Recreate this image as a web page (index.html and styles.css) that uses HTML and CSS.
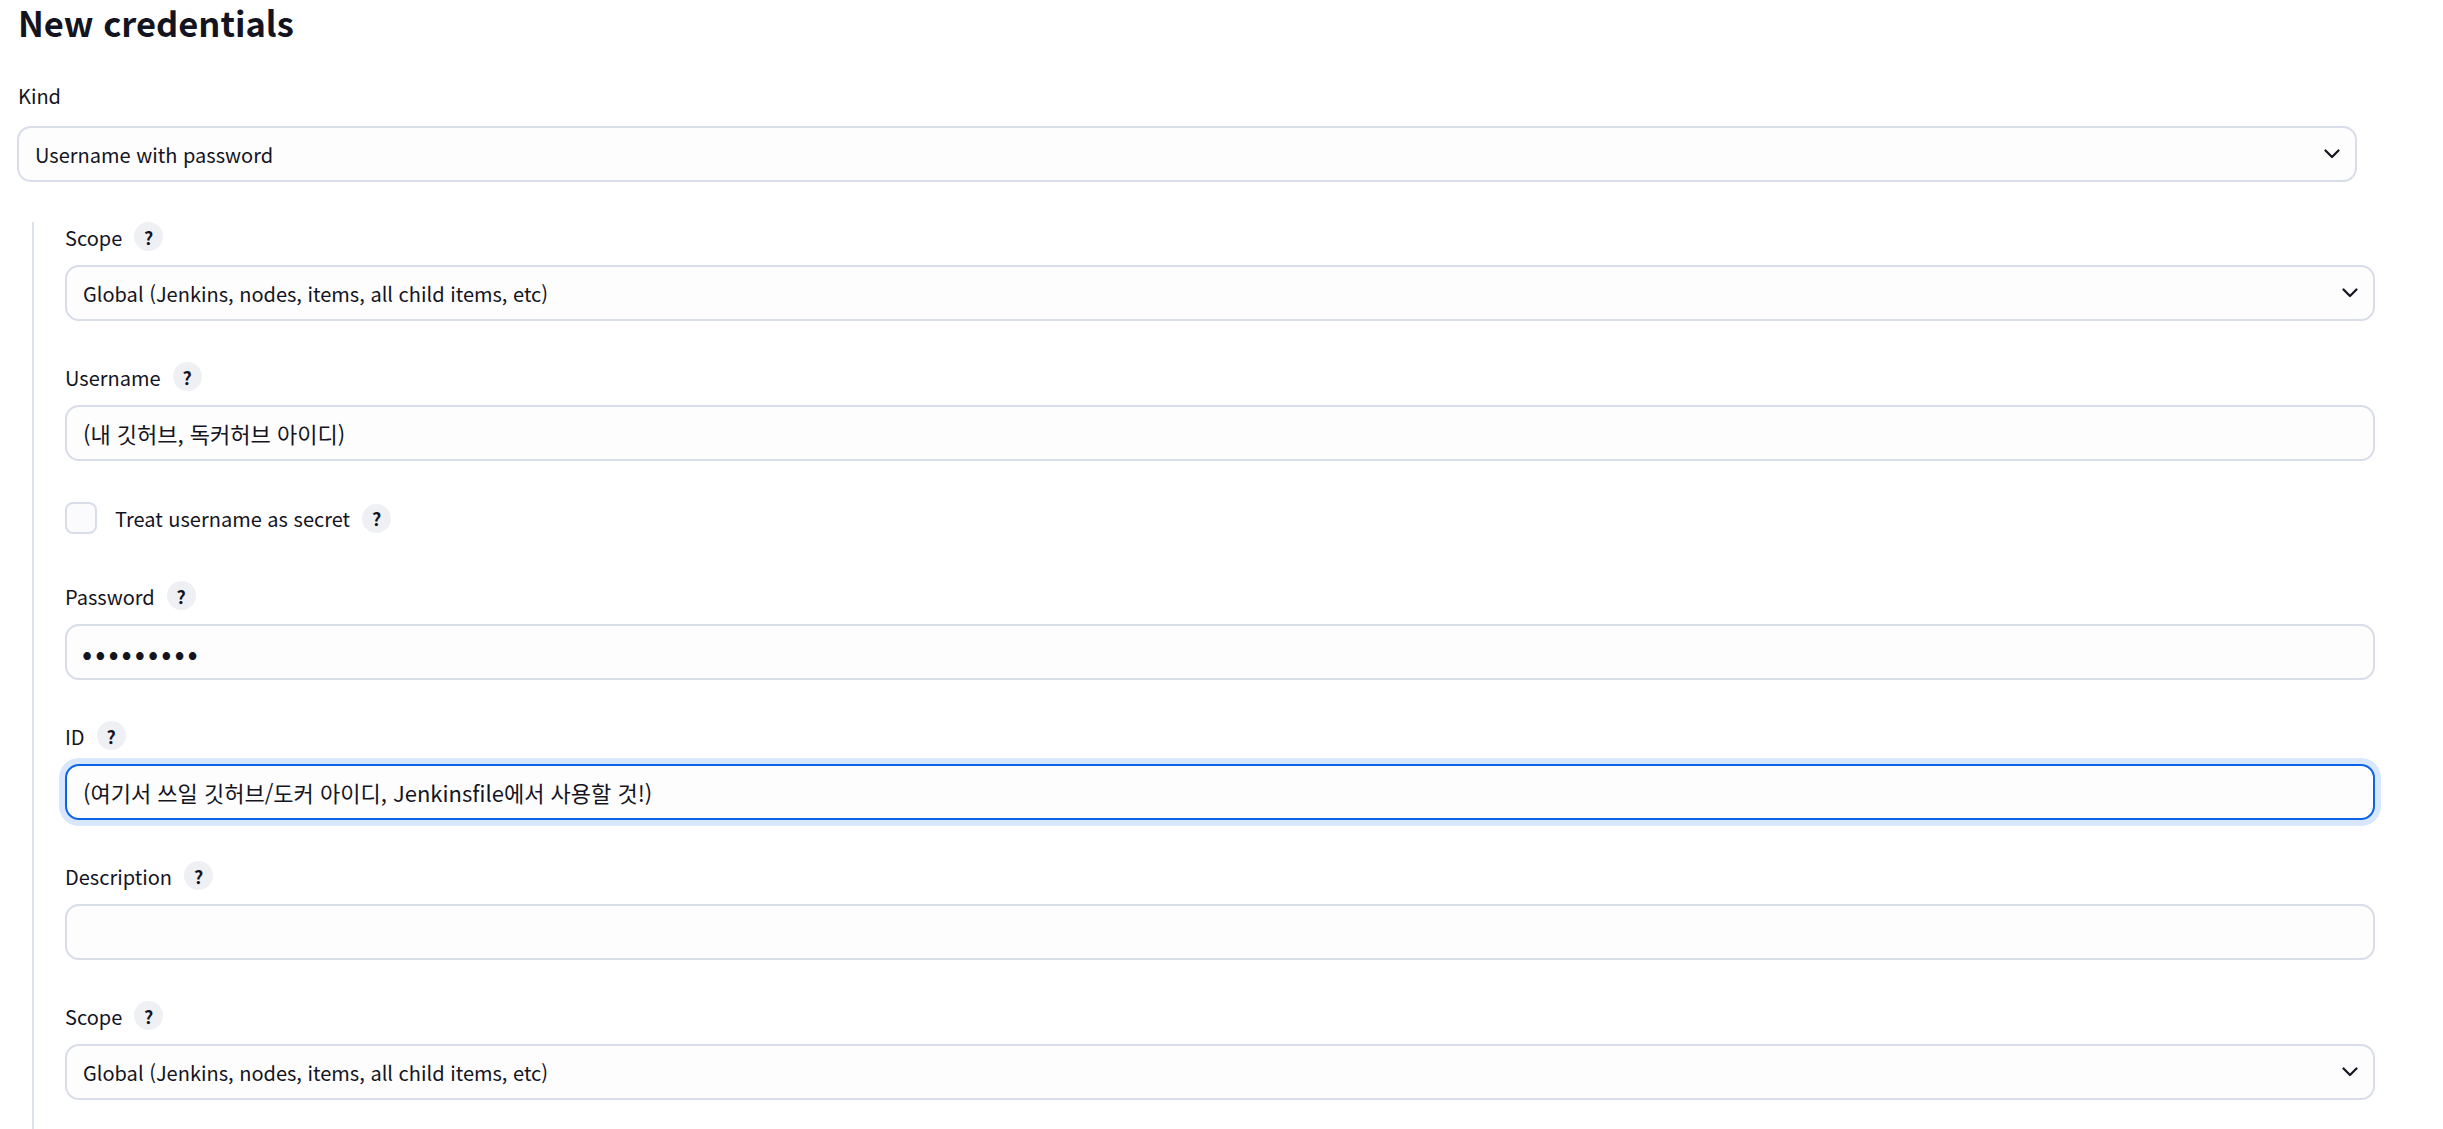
FILE: index.html
```html
<!DOCTYPE html>
<html lang="ko">
<head>
<meta charset="utf-8">
<title>New credentials</title>
<link rel="stylesheet" href="styles.css">
</head>
<body>
<div class="page">
  <h1 class="title">New credentials</h1>

  <div class="item kind">
    <div class="label-row kind-label"><span class="label">Kind</span></div>
    <div class="select-wrap">
      <select class="control select"><option>Username with password</option></select>
      <svg class="chevron" viewBox="0 0 16 10" width="16" height="10"><path d="M1.5 1.5 L8 8 L14.5 1.5" fill="none" stroke="#14141f" stroke-width="2.2" stroke-linecap="round" stroke-linejoin="round"/></svg>
    </div>
  </div>

  <div class="nested">
    <div class="item">
      <div class="label-row"><span class="label">Scope</span><span class="help">?</span></div>
      <div class="select-wrap">
        <select class="control select"><option>Global (Jenkins, nodes, items, all child items, etc)</option></select>
        <svg class="chevron" viewBox="0 0 16 10" width="16" height="10"><path d="M1.5 1.5 L8 8 L14.5 1.5" fill="none" stroke="#14141f" stroke-width="2.2" stroke-linecap="round" stroke-linejoin="round"/></svg>
      </div>
    </div>

    <div class="item">
      <div class="label-row"><span class="label">Username</span><span class="help">?</span></div>
      <input class="control hangul" type="text" value="(내 깃허브, 독커허브 아이디)">
    </div>

    <div class="item check-item">
      <span class="checkbox"></span>
      <span class="label check-label">Treat username as secret</span>
      <span class="help">?</span>
    </div>

    <div class="item">
      <div class="label-row"><span class="label">Password</span><span class="help">?</span></div>
      <input class="control secret" type="password" value="123456789">
    </div>

    <div class="item">
      <div class="label-row"><span class="label">ID</span><span class="help">?</span></div>
      <input class="control hangul focused" type="text" value="(여기서 쓰일 깃허브/도커 아이디, Jenkinsfile에서 사용할 것!)">
    </div>

    <div class="item">
      <div class="label-row"><span class="label">Description</span><span class="help">?</span></div>
      <input class="control" type="text" value="">
    </div>

    <div class="item">
      <div class="label-row"><span class="label">Scope</span><span class="help">?</span></div>
      <div class="select-wrap">
        <select class="control select"><option>Global (Jenkins, nodes, items, all child items, etc)</option></select>
        <svg class="chevron" viewBox="0 0 16 10" width="16" height="10"><path d="M1.5 1.5 L8 8 L14.5 1.5" fill="none" stroke="#14141f" stroke-width="2.2" stroke-linecap="round" stroke-linejoin="round"/></svg>
      </div>
    </div>
  </div>
</div>
</body>
</html>
```

FILE: styles.css
```css
html, body {
  margin: 0;
  padding: 0;
  background: #ffffff;
}

body {
  font-family: "Noto Sans CJK KR", "Noto Sans", sans-serif;
  color: #14141f;
  font-size: 20px;
  overflow: hidden;
}

.page {
  padding: 0 68px 0 17px;
}

.title {
  margin: 0;
  font-size: 34.5px;
  font-weight: 700;
  line-height: 46px;
  height: 46px;
  margin-top: -1px;
  padding-left: 1px;
}

.item {
  margin-bottom: 41px;
}

.kind {
  margin-right: 18px;
  margin-bottom: 40px;
}

.label-row {
  display: flex;
  align-items: center;
  height: 29px;
  margin-bottom: 14px;
  gap: 12px;
}

.kind-label {
  margin-top: 35px;
  margin-bottom: 17px;
  padding-left: 1px;
}

.label {
  font-size: 20px;
  line-height: 29px;
  padding-top: 2px;
}

.help {
  width: 29px;
  height: 29px;
  border-radius: 50%;
  background: #eff0f4;
  display: flex;
  align-items: center;
  justify-content: center;
  font-size: 18px;
  font-weight: 700;
  color: #14141f;
  flex: none;
}

.control {
  display: block;
  box-sizing: border-box;
  width: 100%;
  height: 56px;
  margin: 0;
  padding: 0 16px;
  border: 2px solid #d9dde9;
  border-radius: 14px;
  background: #fdfdfd;
  font-family: inherit;
  font-size: 20px;
  color: #14141f;
  outline: none;
}

.hangul {
  font-size: 22px;
}

.secret {
  font-size: 30px;
  letter-spacing: 3px;
  padding-left: 15px;
}

.select {
  appearance: none;
  -webkit-appearance: none;
}

.select-wrap {
  position: relative;
}

.chevron {
  position: absolute;
  right: 17px;
  top: 23px;
  pointer-events: none;
}

.focused {
  border-color: #0b64e8;
  box-shadow: 0 0 0 6px #d8e7fd;
}

.nested {
  margin-left: 15px;
  border-left: 2px solid #dde1ec;
  padding-left: 31px;
  padding-bottom: 40px;
}

.check-item {
  display: flex;
  align-items: center;
  height: 32px;
  margin-bottom: 47px;
}

.checkbox {
  box-sizing: border-box;
  width: 32px;
  height: 32px;
  border: 2px solid #d9dde9;
  border-radius: 8px;
  background: #fbfbfd;
  margin-right: 18px;
  flex: none;
}

.check-label {
  margin-right: 12px;
  padding-top: 0;
}
```
